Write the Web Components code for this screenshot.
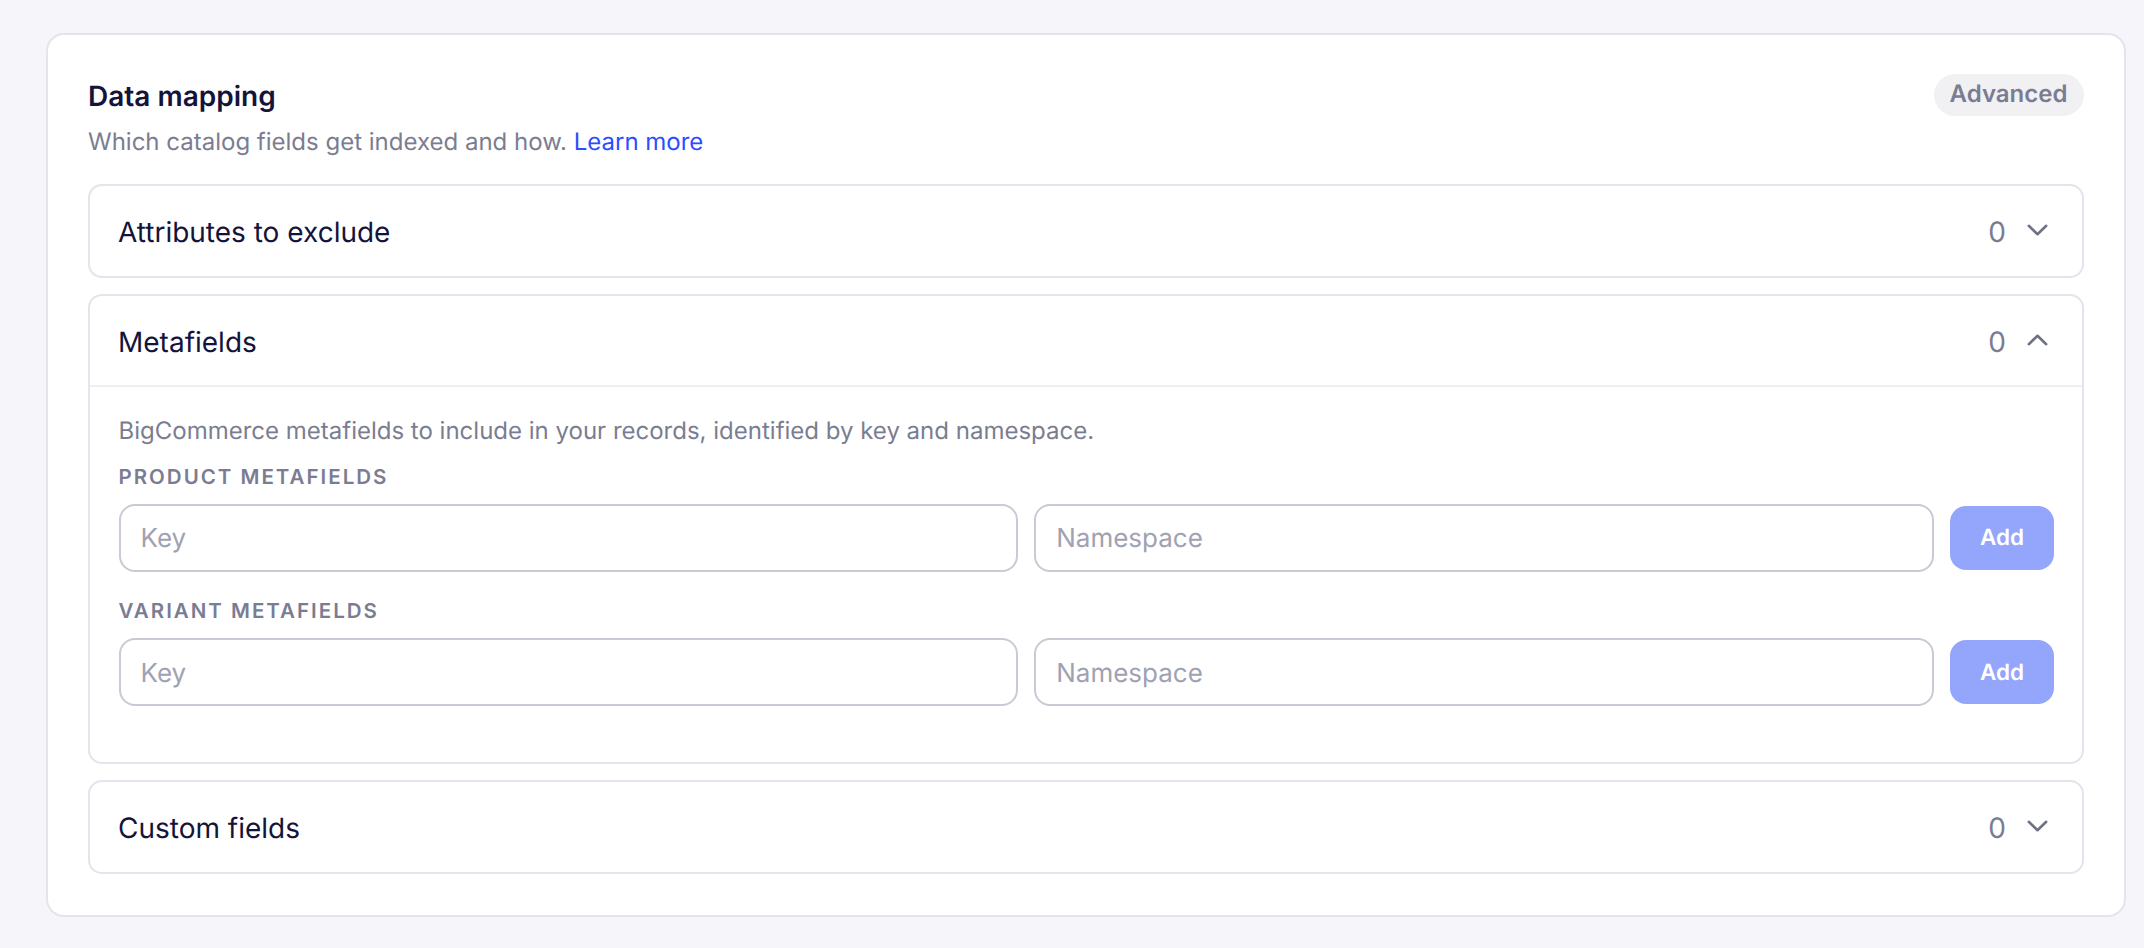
<!DOCTYPE html>
<html lang="en">
<head>
<meta charset="utf-8">
<title>Data mapping</title>
<style>
html,body{margin:0;padding:0;background:#f5f5fa;height:100%;overflow:hidden}
body{font-family:Inter,"Liberation Sans",sans-serif;color:#14143a;text-rendering:geometricPrecision}
a{color:#2a4dff;text-decoration:none}
</style>
</head>
<body>
<settings-page>
  <settings-card heading="Data mapping" badge="Advanced">
    <span slot="sub">Which catalog fields get indexed and how. <a href="#">Learn more</a></span>
    <accordion-panel heading="Attributes to exclude" count="0"></accordion-panel>
    <accordion-panel heading="Metafields" count="0" open>
      <p-desc>BigCommerce metafields to include in your records, identified by key and namespace.</p-desc>
      <field-row label="PRODUCT METAFIELDS"></field-row>
      <field-row label="VARIANT METAFIELDS"></field-row>
    </accordion-panel>
    <accordion-panel heading="Custom fields" count="0"></accordion-panel>
  </settings-card>
</settings-page>
<script>
function def(name, html){
  customElements.define(name, class extends HTMLElement{
    connectedCallback(){
      if(this.shadowRoot) return;
      const r=this.attachShadow({mode:'open'});
      const attrs={};
      for(const a of this.attributes) attrs[a.name]=a.value;
      r.innerHTML=typeof html==='function'?html(attrs):html;
    }
  });
}
def('settings-page',`<style>:host{display:block;padding:32.5px 18.5px 32px 46px}</style><slot></slot>`);
def('settings-card',a=>`<style>
:host{display:block;background:#fff;border:2px solid #e4e4ec;border-radius:18px;padding:30px 40px 41px;height:884px;box-sizing:border-box}
.top{display:flex;justify-content:space-between;align-items:flex-start;height:110.5px}
h2{margin:13px 0 0;font:600 28px/36px Inter,sans-serif;color:#14143a}
.sub{font:400 24px/32px Inter,sans-serif;color:#7a7d92;margin-top:12.5px}
.badge{margin-top:9px;height:42px;width:150px;box-sizing:border-box;border-radius:21px;background:#f1f1f3;color:#7a7d92;font:600 24px/40px Inter,sans-serif;text-align:center}
.list{display:flex;flex-direction:column;gap:16.5px;margin-top:9px}
</style>
<div class="top"><div><h2>${a.heading}</h2><div class="sub"><slot name="sub"></slot></div></div><div class="badge">${a.badge}</div></div>
<div class="list"><slot></slot></div>`);
def('accordion-panel',a=>{
 const open='open' in a;
 const chev=open?'M1.8 10.2L10.5 1.8L19.2 10.2':'M1.8 1.8L10.5 10.2L19.2 1.8';
 return `<style>
:host{display:block;border:2px solid #e4e4ec;border-radius:14px;background:#fff}
.head{display:flex;align-items:center;box-sizing:border-box;height:${open?91:89.5}px;padding:${open?2.5:3}px 28px 0;${open?'border-bottom:2px solid #eeeef3;':''}}
.t{flex:1;font:400 28px/36px Inter,sans-serif;color:#14143a}
.c{font:400 28px/36px Inter,sans-serif;color:#7a7d92;margin-right:20.5px}
svg{display:block;margin-top:-4px;margin-right:6px}
.body{padding:27.5px 27.5px 55.5px 28.5px;display:${open?'block':'none'}}
</style>
<div class="head"><div class="t">${a.heading}</div><div class="c">${a.count}</div>
<svg width="21" height="12" viewBox="0 0 21 12" fill="none" stroke="#6f7285" stroke-width="2.6" stroke-linecap="round" stroke-linejoin="round"><path d="${chev}"/></svg></div>
<div class="body"><slot></slot></div>`});
def('p-desc',`<style>:host{display:block;font:400 24px/32px Inter,sans-serif;color:#7a7d92}</style><slot></slot>`);
def('field-row',a=>`<style>
:host{display:block}
.l{font:600 20.5px/28px Inter,sans-serif;letter-spacing:2px;color:#7a7d92;margin:16px 0 13px;height:28px}
:host(:last-child) .l{margin-top:25.5px}
.r{display:grid;grid-template-columns:1fr 1fr 104px;gap:16px;align-items:center}
input{box-sizing:border-box;width:100%;height:68px;border:2px solid #c8cad4;border-radius:16px;padding:2px 20px 0;font:400 26px Inter,sans-serif;text-rendering:geometricPrecision;color:#14143a;background:#fff;outline:none}
input::placeholder{color:#9fa2b2;opacity:1}
button{height:64px;width:104px;border:0;border-radius:16px;background:#94a6fb;color:#fff;font:600 22.5px Inter,sans-serif;text-rendering:geometricPrecision;padding:0}
</style>
<div class="l">${a.label}</div>
<div class="r"><input placeholder="Key"><input placeholder="Namespace"><button>Add</button></div>`);
</script>
</body>
</html>
